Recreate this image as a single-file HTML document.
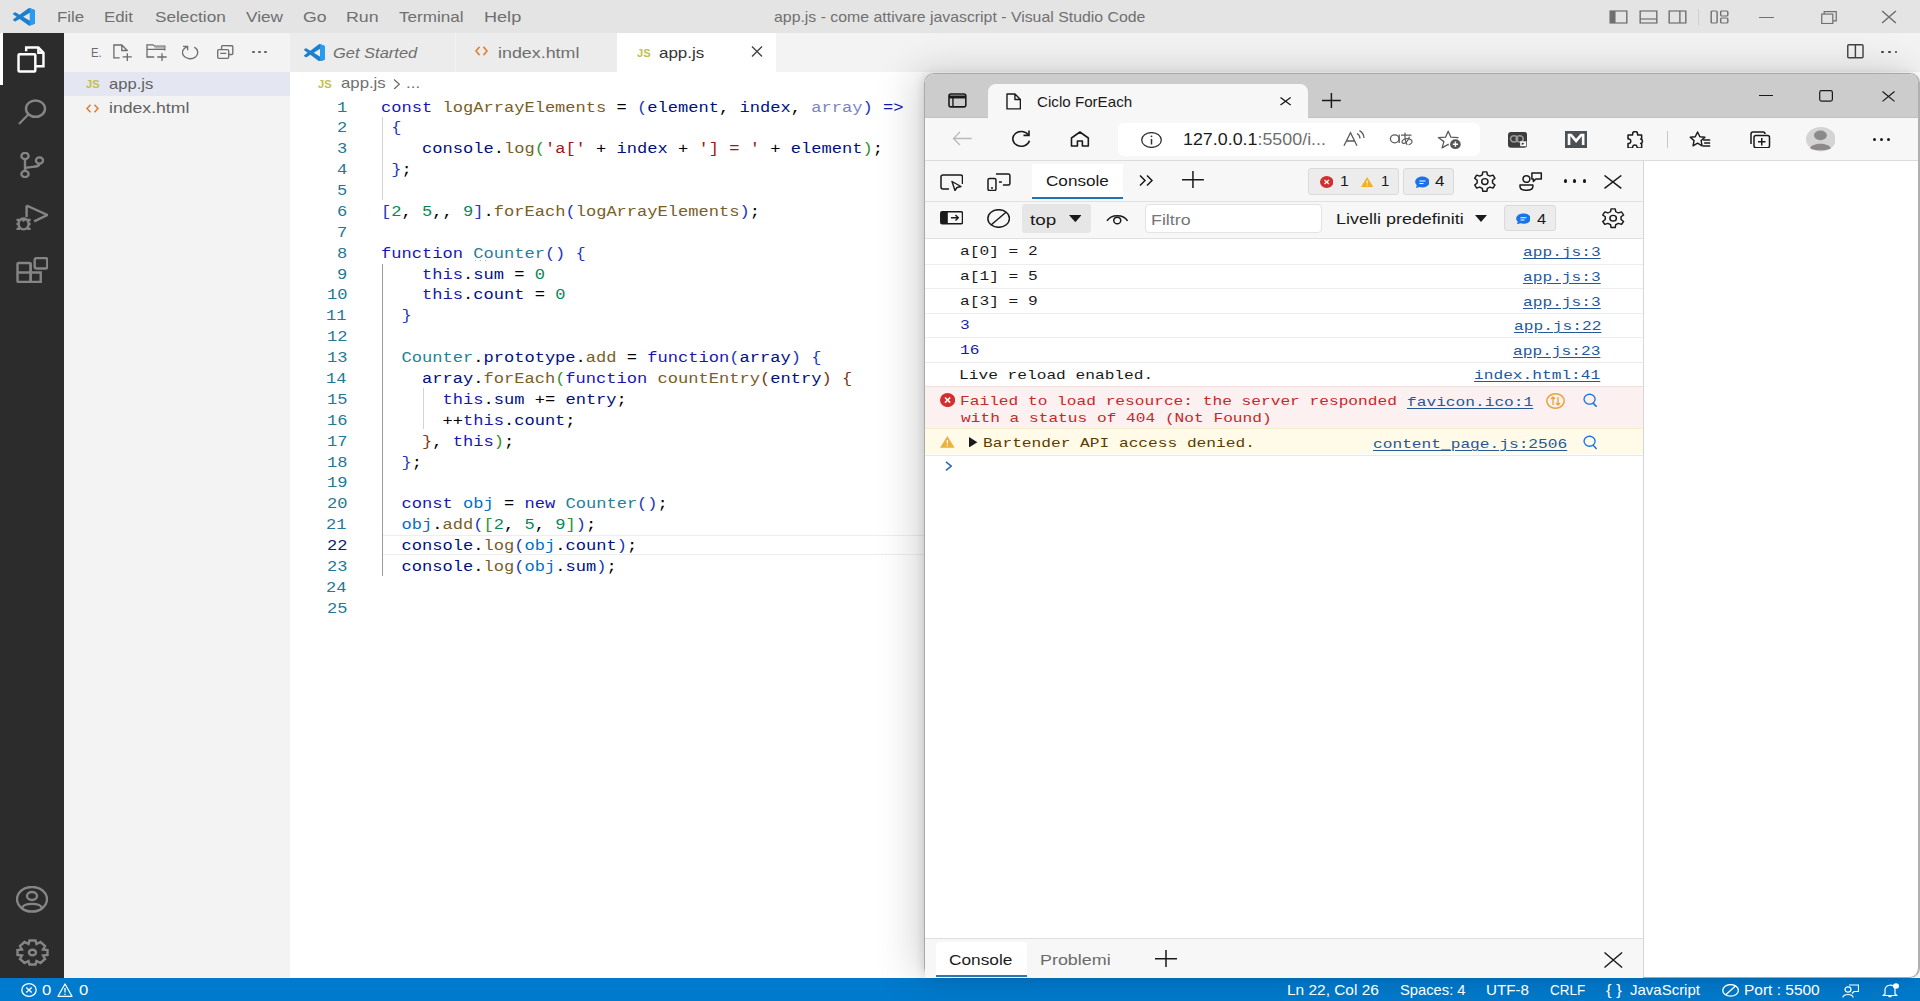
<!DOCTYPE html>
<html><head><meta charset="utf-8"><style>*{margin:0;padding:0;box-sizing:border-box}
html,body{width:1920px;height:1001px;overflow:hidden;background:#fff}
.a{position:absolute}
.t{position:absolute;line-height:1;white-space:pre;transform-origin:0 0}
.k{color:#1717b0}.v{color:#001080}.f{color:#795e26}.s{color:#a31515}.n{color:#098658}.c{color:#267f99}.o{color:#0070c1}
.b1{color:#2538b8}.b2{color:#319331}.b3{color:#7b3814}.u{color:#7b84bd}
</style></head><body>
<div class="a" style="left:0.00px;top:0.00px;width:1920.00px;height:33.00px;background:#e4e4e4;"></div>
<div class="a" style="left:0.00px;top:33.00px;width:64.00px;height:945.00px;background:#2c2c2c;"></div>
<div class="a" style="left:0.00px;top:33.00px;width:3.00px;height:52.00px;background:#ffffff;"></div>
<div class="a" style="left:64.00px;top:33.00px;width:226.00px;height:945.00px;background:#f3f3f3;"></div>
<div class="a" style="left:290.00px;top:33.00px;width:1630.00px;height:38.50px;background:#f3f3f3;"></div>
<div class="a" style="left:290.00px;top:33.00px;width:165.00px;height:38.50px;background:#ececec;"></div>
<div class="a" style="left:455.00px;top:33.00px;width:1.00px;height:38.50px;background:#f3f3f3;"></div>
<div class="a" style="left:456.00px;top:33.00px;width:161.00px;height:38.50px;background:#ececec;"></div>
<div class="a" style="left:617.00px;top:33.00px;width:159.00px;height:38.50px;background:#ffffff;"></div>
<div class="a" style="left:290.00px;top:71.50px;width:634.00px;height:906.50px;background:#ffffff;"></div>
<div class="a" style="left:64.00px;top:72.00px;width:226.00px;height:24.00px;background:#e4e6f1;"></div>
<div class="a" style="left:0.00px;top:978.00px;width:1920.00px;height:23.00px;background:#007acc;"></div>
<svg class="a" style="left:12.70px;top:8.00px;" width="22.50" height="17.70" viewBox="0 0 100 100" preserveAspectRatio="none"><path d="M96.46 10.8 L75.86 0.87 A6.23 6.23 0 0 0 68.76 2.08 L29.33 38.04 L12.15 25 A4.16 4.16 0 0 0 6.83 25.24 L1.36 30.2 A4.17 4.17 0 0 0 1.36 36.36 L16.26 50 L1.36 63.64 A4.17 4.17 0 0 0 1.36 69.8 L6.83 74.77 A4.16 4.16 0 0 0 12.15 75.01 L29.33 61.97 L68.76 97.93 A6.23 6.23 0 0 0 75.86 99.14 L96.46 89.21 A6.25 6.25 0 0 0 100 83.58 V16.43 A6.25 6.25 0 0 0 96.46 10.8 Z M75.01 72.7 L45.1 50 L75.01 27.3 Z" fill="#1b80cf"/><path d="M75.86 0.87 L96.46 10.8 A6.25 6.25 0 0 1 100 16.43 V83.58 A6.25 6.25 0 0 1 96.46 89.21 L75.86 99.14 A6.23 6.23 0 0 1 68.76 97.93 Q75 96 75 90 V10 Q75 4 68.76 2.08 A6.23 6.23 0 0 1 75.86 0.87 Z" fill="#2a9bf0"/></svg>
<div class="t" style="left:56.65px;top:9.35px;font-family:'Liberation Sans',sans-serif;font-size:15px;color:#6f6f6f;transform:scaleX(1.1223);">File</div>
<div class="t" style="left:104.15px;top:9.35px;font-family:'Liberation Sans',sans-serif;font-size:15px;color:#6f6f6f;transform:scaleX(1.1213);">Edit</div>
<div class="t" style="left:154.63px;top:9.35px;font-family:'Liberation Sans',sans-serif;font-size:15px;color:#6f6f6f;transform:scaleX(1.1469);">Selection</div>
<div class="t" style="left:245.91px;top:9.35px;font-family:'Liberation Sans',sans-serif;font-size:15px;color:#6f6f6f;transform:scaleX(1.1500);">View</div>
<div class="t" style="left:303.12px;top:9.35px;font-family:'Liberation Sans',sans-serif;font-size:15px;color:#6f6f6f;transform:scaleX(1.1780);">Go</div>
<div class="t" style="left:345.58px;top:9.35px;font-family:'Liberation Sans',sans-serif;font-size:15px;color:#6f6f6f;transform:scaleX(1.1834);">Run</div>
<div class="t" style="left:398.66px;top:9.35px;font-family:'Liberation Sans',sans-serif;font-size:15px;color:#6f6f6f;transform:scaleX(1.1382);">Terminal</div>
<div class="t" style="left:483.55px;top:9.35px;font-family:'Liberation Sans',sans-serif;font-size:15px;color:#6f6f6f;transform:scaleX(1.2059);">Help</div>
<div class="t" style="left:774.37px;top:9.35px;font-family:'Liberation Sans',sans-serif;font-size:15px;color:#707070;transform:scaleX(1.0564);">app.js - come attivare javascript - Visual Studio Code</div>
<svg class="a" style="left:1609.00px;top:9.00px;" width="19.00" height="16.00" viewBox="0 0 16 16" preserveAspectRatio="none"><rect x="1" y="2" width="14" height="12" fill="none" stroke="#707070" stroke-width="1.2"/><rect x="1" y="2" width="4.5" height="12" fill="#707070"/></svg>
<svg class="a" style="left:1639.00px;top:9.00px;" width="19.00" height="16.00" viewBox="0 0 16 16" preserveAspectRatio="none"><rect x="1" y="2" width="14" height="12" fill="none" stroke="#707070" stroke-width="1.2"/><line x1="1" y1="10" x2="15" y2="10" stroke="#707070" stroke-width="1.2"/></svg>
<svg class="a" style="left:1668.00px;top:9.00px;" width="19.00" height="16.00" viewBox="0 0 16 16" preserveAspectRatio="none"><rect x="1" y="2" width="14" height="12" fill="none" stroke="#707070" stroke-width="1.2"/><line x1="10" y1="2" x2="10" y2="14" stroke="#707070" stroke-width="1.2"/></svg>
<div class="a" style="left:1698.00px;top:9.00px;width:1.00px;height:16.00px;background:#cfcfcf;"></div>
<svg class="a" style="left:1710.00px;top:9.00px;" width="19.00" height="16.00" viewBox="0 0 16 16" preserveAspectRatio="none"><rect x="1" y="2" width="5" height="12" rx="1" fill="none" stroke="#707070" stroke-width="1.2"/><rect x="9" y="2" width="6" height="5" rx="1" fill="none" stroke="#707070" stroke-width="1.2"/><rect x="9" y="9" width="6" height="5" rx="1" fill="none" stroke="#707070" stroke-width="1.2"/></svg>
<div class="a" style="left:1759.00px;top:17.00px;width:15.00px;height:1.20px;background:#707070;"></div>
<svg class="a" style="left:1821.00px;top:11.00px;" width="16.00" height="13.00" viewBox="0 0 13 11" preserveAspectRatio="none"><rect x="0.6" y="2.6" width="9" height="8" fill="none" stroke="#707070" stroke-width="1"/><path d="M2.6 2.6 V0.6 H12.4 V8.4 H9.6" fill="none" stroke="#707070" stroke-width="1"/></svg>
<svg class="a" style="left:1881.00px;top:10.00px;" width="16.00" height="14.00" viewBox="0 0 14 14" preserveAspectRatio="none"><path d="M1 1 L13 13 M13 1 L1 13" stroke="#707070" stroke-width="1.3"/></svg>
<svg class="a" style="left:17.10px;top:45.80px;" width="28.50" height="27.00" viewBox="0 0 28 26" preserveAspectRatio="none"><path d="M9 5 V1.5 H21 L26 6.5 V19.5 H18" fill="none" stroke="#fff" stroke-width="2.4"/><path d="M21 1.5 V6.5 H26" fill="none" stroke="#fff" stroke-width="2.4"/><rect x="1.5" y="8" width="16.5" height="16.5" rx="1" fill="none" stroke="#fff" stroke-width="2.4"/></svg>
<svg class="a" style="left:17.40px;top:98.50px;" width="30.00" height="26.50" viewBox="0 0 30 26" preserveAspectRatio="none"><ellipse cx="18.5" cy="9.5" rx="9.5" ry="8" fill="none" stroke="#858585" stroke-width="2.4" stroke-width="2.4"/><line x1="11.5" y1="15" x2="2" y2="24.5" stroke="#858585" stroke-width="2.2"/></svg>
<svg class="a" style="left:19.50px;top:151.50px;" width="24.50" height="26.50" viewBox="0 0 24.5 26.5" preserveAspectRatio="none"><ellipse cx="5" cy="4" rx="3.6" ry="3.1" fill="none" stroke="#858585" stroke-width="2.4"/><ellipse cx="5" cy="22" rx="3.6" ry="3.1" fill="none" stroke="#858585" stroke-width="2.4"/><ellipse cx="19.5" cy="8.5" rx="3.6" ry="3.1" fill="none" stroke="#858585" stroke-width="2.4"/><path d="M5 7.2 V18.8 M19.5 11.6 C19.5 16 12 14 5.5 16" fill="none" stroke="#858585" stroke-width="2.4"/></svg>
<svg class="a" style="left:15.70px;top:204.30px;" width="32.30" height="26.90" viewBox="0 0 32 27" preserveAspectRatio="none"><path d="M10.5 1.5 L31 11 L18 17.5 M10.5 1.5 V13" fill="none" stroke="#858585" stroke-width="2.4"/><ellipse cx="7.5" cy="20" rx="5" ry="5.5" fill="none" stroke="#858585" stroke-width="2.4"/><path d="M0.5 16 H4 M0.5 20 H2.5 M0.5 25 H4 M11 16 H14.5 M12.5 20 H14.5 M11 25 H14.5 M5 14.5 L7.5 16.5 L10 14.5" fill="none" stroke="#858585" stroke-width="2.4"/></svg>
<svg class="a" style="left:15.70px;top:256.80px;" width="32.30" height="26.40" viewBox="0 0 32 26.5" preserveAspectRatio="none"><rect x="1.5" y="6" width="13" height="19" rx="1" fill="none" stroke="#858585" stroke-width="2.4"/><path d="M1.5 15.5 H24.5 V25 H14.5 V6" fill="none" stroke="#858585" stroke-width="2.4"/><rect x="18.5" y="1" width="12.5" height="10.5" rx="2" fill="none" stroke="#858585" stroke-width="2.4"/></svg>
<svg class="a" style="left:16.00px;top:886.00px;" width="32.00" height="26.50" viewBox="0 0 32 26.5" preserveAspectRatio="none"><ellipse cx="16" cy="13.25" rx="15" ry="12.3" fill="none" stroke="#858585" stroke-width="2.4"/><ellipse cx="16" cy="10" rx="5" ry="4" fill="none" stroke="#858585" stroke-width="2.4"/><path d="M6 22 C8 16.5 24 16.5 26 22" fill="none" stroke="#858585" stroke-width="2.4"/></svg>
<svg class="a" style="left:15.50px;top:938.50px;" width="33.00" height="27.00" viewBox="0 0 33 27" preserveAspectRatio="none"><path d="M13.5 1.5 H19.5 L20.5 5 L24.5 3 L29 7 L27 10.5 L31.5 11 V16 L27 16.5 L29 20 L24.5 24 L20.5 22 L19.5 25.5 H13.5 L12.5 22 L8.5 24 L4 20 L6 16.5 L1.5 16 V11 L6 10.5 L4 7 L8.5 3 L12.5 5 Z" fill="none" stroke="#858585" stroke-width="2.4"/><ellipse cx="16.5" cy="13.5" rx="3.5" ry="2.8" fill="none" stroke="#858585" stroke-width="2.4"/></svg>
<div class="t" style="left:90.70px;top:46.52px;font-family:'Liberation Sans',sans-serif;font-size:12.8px;color:#6b6b6b;transform:scaleX(0.8827);">E.</div>
<svg class="a" style="left:110.00px;top:42.00px;" width="60.00" height="21.00" viewBox="0 0 60 21" preserveAspectRatio="none"><path d="M9.7 15.9 H3.9 V3 H11.8 L17.3 8.5 V9 M11.8 3 V8.5 H17.3 M17.3 11.3 V19 M12.6 14.9 H21.8" fill="none" stroke="#6b6b6b" stroke-width="1.3"/><path d="M44.2 15 H37 V2.8 H43 L44.8 4.2 H54.8 V8.4 M37 7.3 H54.8 M52 11.3 V19 M47.3 15 H56.6" fill="none" stroke="#6b6b6b" stroke-width="1.3"/><rect x="44.5" y="4.6" width="10" height="2.2" fill="#b5b5b5"/></svg>
<svg class="a" style="left:182.00px;top:44.50px;" width="17.00" height="15.50" viewBox="0 0 17 15.5" preserveAspectRatio="none"><path d="M12.3 2.2 A7.6 6.3 0 1 1 5.3 1.6" fill="none" stroke="#6f6f6f" stroke-width="1.35"/><path d="M1 1.3 H5.6 V5.2" fill="none" stroke="#6f6f6f" stroke-width="1.35"/></svg>
<svg class="a" style="left:217.00px;top:45.00px;" width="16.50" height="14.00" viewBox="0 0 16.5 14" preserveAspectRatio="none"><rect x="0.7" y="4.6" width="11" height="8.7" rx="1.2" fill="none" stroke="#6f6f6f" stroke-width="1.35"/><path d="M4.6 4.6 V1.5 A0.9 0.9 0 0 1 5.5 0.7 H14.9 A0.9 0.9 0 0 1 15.8 1.5 V8.7 A0.9 0.9 0 0 1 14.9 9.5 H11.7 M3.2 8.4 H9.3" fill="none" stroke="#6f6f6f" stroke-width="1.35"/></svg>
<div class="a" style="left:252.30px;top:51.00px;width:2.40px;height:2.40px;background:#616161;border-radius:50%"></div>
<div class="a" style="left:258.30px;top:51.00px;width:2.40px;height:2.40px;background:#616161;border-radius:50%"></div>
<div class="a" style="left:264.30px;top:51.00px;width:2.40px;height:2.40px;background:#616161;border-radius:50%"></div>
<div class="t" style="left:85.83px;top:78.65px;font-family:'Liberation Sans',sans-serif;font-size:11px;color:#c1c14c;transform:scaleX(1.0101);font-weight:bold;">JS</div>
<div class="t" style="left:109.34px;top:76.00px;font-family:'Liberation Sans',sans-serif;font-size:15px;color:#616161;transform:scaleX(1.1047);">app.js</div>
<svg class="a" style="left:86.00px;top:104.00px;" width="13.00" height="9.00" viewBox="0 0 13 9" preserveAspectRatio="none"><path d="M4.5 0.8 L1 4.5 L4.5 8.2 M8.5 0.8 L12 4.5 L8.5 8.2" fill="none" stroke="#e37933" stroke-width="1.5"/></svg>
<div class="t" style="left:108.85px;top:100.25px;font-family:'Liberation Sans',sans-serif;font-size:15px;color:#616161;transform:scaleX(1.1751);">index.html</div>
<svg class="a" style="left:303.60px;top:43.90px;" width="21.60" height="17.50" viewBox="0 0 100 100" preserveAspectRatio="none"><path d="M96.46 10.8 L75.86 0.87 A6.23 6.23 0 0 0 68.76 2.08 L29.33 38.04 L12.15 25 A4.16 4.16 0 0 0 6.83 25.24 L1.36 30.2 A4.17 4.17 0 0 0 1.36 36.36 L16.26 50 L1.36 63.64 A4.17 4.17 0 0 0 1.36 69.8 L6.83 74.77 A4.16 4.16 0 0 0 12.15 75.01 L29.33 61.97 L68.76 97.93 A6.23 6.23 0 0 0 75.86 99.14 L96.46 89.21 A6.25 6.25 0 0 0 100 83.58 V16.43 A6.25 6.25 0 0 0 96.46 10.8 Z M75.01 72.7 L45.1 50 L75.01 27.3 Z" fill="#1b80cf"/><path d="M75.86 0.87 L96.46 10.8 A6.25 6.25 0 0 1 100 16.43 V83.58 A6.25 6.25 0 0 1 96.46 89.21 L75.86 99.14 A6.23 6.23 0 0 1 68.76 97.93 Q75 96 75 90 V10 Q75 4 68.76 2.08 A6.23 6.23 0 0 1 75.86 0.87 Z" fill="#2a9bf0"/></svg>
<div class="t" style="left:333.08px;top:45.05px;font-family:'Liberation Sans',sans-serif;font-size:15px;color:#6f6f6f;transform:scaleX(1.0978);font-style:italic;">Get Started</div>
<svg class="a" style="left:475.00px;top:46.00px;" width="13.00" height="10.00" viewBox="0 0 13 9" preserveAspectRatio="none"><path d="M4.5 0.8 L1 4.5 L4.5 8.2 M8.5 0.8 L12 4.5 L8.5 8.2" fill="none" stroke="#e37933" stroke-width="1.5"/></svg>
<div class="t" style="left:497.84px;top:45.25px;font-family:'Liberation Sans',sans-serif;font-size:15px;color:#6f6f6f;transform:scaleX(1.1902);">index.html</div>
<div class="t" style="left:636.83px;top:47.65px;font-family:'Liberation Sans',sans-serif;font-size:11px;color:#c1c14c;transform:scaleX(1.0101);font-weight:bold;">JS</div>
<div class="t" style="left:659.32px;top:45.25px;font-family:'Liberation Sans',sans-serif;font-size:15px;color:#333333;transform:scaleX(1.1304);">app.js</div>
<svg class="a" style="left:751.00px;top:46.00px;" width="12.00" height="11.00" viewBox="0 0 12 11" preserveAspectRatio="none"><path d="M1 0.5 L11 10.5 M11 0.5 L1 10.5" stroke="#424242" stroke-width="1.4"/></svg>
<div class="t" style="left:317.83px;top:78.65px;font-family:'Liberation Sans',sans-serif;font-size:11px;color:#c1c14c;transform:scaleX(1.0101);font-weight:bold;">JS</div>
<div class="t" style="left:341.23px;top:75.45px;font-family:'Liberation Sans',sans-serif;font-size:15px;color:#6f6f6f;transform:scaleX(1.1175);">app.js</div>
<svg class="a" style="left:393.00px;top:78.50px;" width="7.40" height="10.50" viewBox="0 0 7 10" preserveAspectRatio="none"><path d="M1 0.5 L6 5 L1 9.5" fill="none" stroke="#6f6f6f" stroke-width="1.3"/></svg>
<div class="t" style="left:406.48px;top:75.45px;font-family:'Liberation Sans',sans-serif;font-size:15px;color:#6f6f6f;transform:scaleX(1.1282);">...</div>
<div class="a" style="left:382.00px;top:535.30px;width:542.00px;height:19.50px;background:transparent;border-top:1.5px solid #eeeeee;border-bottom:1.5px solid #eeeeee"></div>
<div class="a" style="left:381.50px;top:117.00px;width:1.30px;height:83.00px;background:#d3d3d3;"></div>
<div class="a" style="left:381.50px;top:264.00px;width:1.30px;height:312.00px;background:#9a9a9a;"></div>
<div class="a" style="left:422.50px;top:388.00px;width:1.30px;height:41.00px;background:#d3d3d3;"></div>
<div class="t" style="left:336.61px;top:100.56px;font-family:'Liberation Mono',monospace;font-size:14px;color:#237893;transform:scaleX(1.2190);">1</div>
<div class="t" style="left:381.40px;top:100.56px;font-family:'Liberation Mono',monospace;font-size:14px;color:#000;transform:scaleX(1.2190)"><span class="k">const</span> <span class="f">logArrayElements</span> = <span class="b1">(</span><span class="v">element</span>, <span class="v">index</span>, <span class="u">array</span><span class="b1">)</span> <span class="k">=&gt;</span></div>
<div class="t" style="left:336.95px;top:121.44px;font-family:'Liberation Mono',monospace;font-size:14px;color:#237893;transform:scaleX(1.2190);">2</div>
<div class="t" style="left:381.40px;top:121.44px;font-family:'Liberation Mono',monospace;font-size:14px;color:#000;transform:scaleX(1.2190)"> <span class="b1">{</span></div>
<div class="t" style="left:336.87px;top:142.32px;font-family:'Liberation Mono',monospace;font-size:14px;color:#237893;transform:scaleX(1.2190);">3</div>
<div class="t" style="left:381.40px;top:142.32px;font-family:'Liberation Mono',monospace;font-size:14px;color:#000;transform:scaleX(1.2190)">    <span class="v">console</span>.<span class="f">log</span><span class="b2">(</span><span class="s">'a['</span> + <span class="v">index</span> + <span class="s">'] = '</span> + <span class="v">element</span><span class="b2">)</span>;</div>
<div class="t" style="left:336.61px;top:163.20px;font-family:'Liberation Mono',monospace;font-size:14px;color:#237893;transform:scaleX(1.2190);">4</div>
<div class="t" style="left:381.40px;top:163.20px;font-family:'Liberation Mono',monospace;font-size:14px;color:#000;transform:scaleX(1.2190)"> <span class="b1">}</span>;</div>
<div class="t" style="left:336.87px;top:184.08px;font-family:'Liberation Mono',monospace;font-size:14px;color:#237893;transform:scaleX(1.2190);">5</div>
<div class="t" style="left:336.87px;top:204.96px;font-family:'Liberation Mono',monospace;font-size:14px;color:#237893;transform:scaleX(1.2190);">6</div>
<div class="t" style="left:381.40px;top:204.96px;font-family:'Liberation Mono',monospace;font-size:14px;color:#000;transform:scaleX(1.2190)"><span class="b1">[</span><span class="n">2</span>, <span class="n">5</span>,, <span class="n">9</span><span class="b1">]</span>.<span class="f">forEach</span><span class="b1">(</span><span class="f">logArrayElements</span><span class="b1">)</span>;</div>
<div class="t" style="left:337.13px;top:225.84px;font-family:'Liberation Mono',monospace;font-size:14px;color:#237893;transform:scaleX(1.2190);">7</div>
<div class="t" style="left:336.87px;top:246.72px;font-family:'Liberation Mono',monospace;font-size:14px;color:#237893;transform:scaleX(1.2190);">8</div>
<div class="t" style="left:381.40px;top:246.72px;font-family:'Liberation Mono',monospace;font-size:14px;color:#000;transform:scaleX(1.2190)"><span class="k">function</span> <span class="c">Counter</span><span class="b1">()</span> <span class="b1">{</span></div>
<div class="t" style="left:336.95px;top:267.60px;font-family:'Liberation Mono',monospace;font-size:14px;color:#237893;transform:scaleX(1.2190);">9</div>
<div class="t" style="left:381.40px;top:267.60px;font-family:'Liberation Mono',monospace;font-size:14px;color:#000;transform:scaleX(1.2190)">    <span class="k">this</span>.<span class="v">sum</span> = <span class="n">0</span></div>
<div class="t" style="left:326.54px;top:288.48px;font-family:'Liberation Mono',monospace;font-size:14px;color:#237893;transform:scaleX(1.2190);">10</div>
<div class="t" style="left:381.40px;top:288.48px;font-family:'Liberation Mono',monospace;font-size:14px;color:#000;transform:scaleX(1.2190)">    <span class="k">this</span>.<span class="v">count</span> = <span class="n">0</span></div>
<div class="t" style="left:326.37px;top:309.36px;font-family:'Liberation Mono',monospace;font-size:14px;color:#237893;transform:scaleX(1.2190);">11</div>
<div class="t" style="left:381.40px;top:309.36px;font-family:'Liberation Mono',monospace;font-size:14px;color:#000;transform:scaleX(1.2190)">  <span class="b1">}</span></div>
<div class="t" style="left:326.71px;top:330.24px;font-family:'Liberation Mono',monospace;font-size:14px;color:#237893;transform:scaleX(1.2190);">12</div>
<div class="t" style="left:326.63px;top:351.12px;font-family:'Liberation Mono',monospace;font-size:14px;color:#237893;transform:scaleX(1.2190);">13</div>
<div class="t" style="left:381.40px;top:351.12px;font-family:'Liberation Mono',monospace;font-size:14px;color:#000;transform:scaleX(1.2190)">  <span class="c">Counter</span>.<span class="v">prototype</span>.<span class="f">add</span> = <span class="k">function</span><span class="b1">(</span><span class="v">array</span><span class="b1">)</span> <span class="b1">{</span></div>
<div class="t" style="left:326.37px;top:372.00px;font-family:'Liberation Mono',monospace;font-size:14px;color:#237893;transform:scaleX(1.2190);">14</div>
<div class="t" style="left:381.40px;top:372.00px;font-family:'Liberation Mono',monospace;font-size:14px;color:#000;transform:scaleX(1.2190)">    <span class="v">array</span>.<span class="f">forEach</span><span class="b2">(</span><span class="k">function</span> <span class="f">countEntry</span><span class="b3">(</span><span class="v">entry</span><span class="b3">)</span> <span class="b3">{</span></div>
<div class="t" style="left:326.63px;top:392.88px;font-family:'Liberation Mono',monospace;font-size:14px;color:#237893;transform:scaleX(1.2190);">15</div>
<div class="t" style="left:381.40px;top:392.88px;font-family:'Liberation Mono',monospace;font-size:14px;color:#000;transform:scaleX(1.2190)">      <span class="k">this</span>.<span class="v">sum</span> += <span class="v">entry</span>;</div>
<div class="t" style="left:326.63px;top:413.76px;font-family:'Liberation Mono',monospace;font-size:14px;color:#237893;transform:scaleX(1.2190);">16</div>
<div class="t" style="left:381.40px;top:413.76px;font-family:'Liberation Mono',monospace;font-size:14px;color:#000;transform:scaleX(1.2190)">      ++<span class="k">this</span>.<span class="v">count</span>;</div>
<div class="t" style="left:326.89px;top:434.64px;font-family:'Liberation Mono',monospace;font-size:14px;color:#237893;transform:scaleX(1.2190);">17</div>
<div class="t" style="left:381.40px;top:434.64px;font-family:'Liberation Mono',monospace;font-size:14px;color:#000;transform:scaleX(1.2190)">    <span class="b3">}</span>, <span class="k">this</span><span class="b2">)</span>;</div>
<div class="t" style="left:326.63px;top:455.52px;font-family:'Liberation Mono',monospace;font-size:14px;color:#237893;transform:scaleX(1.2190);">18</div>
<div class="t" style="left:381.40px;top:455.52px;font-family:'Liberation Mono',monospace;font-size:14px;color:#000;transform:scaleX(1.2190)">  <span class="b1">}</span>;</div>
<div class="t" style="left:326.71px;top:476.40px;font-family:'Liberation Mono',monospace;font-size:14px;color:#237893;transform:scaleX(1.2190);">19</div>
<div class="t" style="left:326.54px;top:497.28px;font-family:'Liberation Mono',monospace;font-size:14px;color:#237893;transform:scaleX(1.2190);">20</div>
<div class="t" style="left:381.40px;top:497.28px;font-family:'Liberation Mono',monospace;font-size:14px;color:#000;transform:scaleX(1.2190)">  <span class="k">const</span> <span class="o">obj</span> = <span class="k">new</span> <span class="c">Counter</span><span class="b1">()</span>;</div>
<div class="t" style="left:326.37px;top:518.16px;font-family:'Liberation Mono',monospace;font-size:14px;color:#237893;transform:scaleX(1.2190);">21</div>
<div class="t" style="left:381.40px;top:518.16px;font-family:'Liberation Mono',monospace;font-size:14px;color:#000;transform:scaleX(1.2190)">  <span class="o">obj</span>.<span class="f">add</span><span class="b1">(</span><span class="b2">[</span><span class="n">2</span>, <span class="n">5</span>, <span class="n">9</span><span class="b2">]</span><span class="b1">)</span>;</div>
<div class="t" style="left:326.71px;top:539.04px;font-family:'Liberation Mono',monospace;font-size:14px;color:#0b216f;transform:scaleX(1.2190);">22</div>
<div class="t" style="left:381.40px;top:539.04px;font-family:'Liberation Mono',monospace;font-size:14px;color:#000;transform:scaleX(1.2190)">  <span class="v">console</span>.<span class="f">log</span><span class="b1">(</span><span class="o">obj</span>.<span class="v">count</span><span class="b1">)</span>;</div>
<div class="t" style="left:326.63px;top:559.92px;font-family:'Liberation Mono',monospace;font-size:14px;color:#237893;transform:scaleX(1.2190);">23</div>
<div class="t" style="left:381.40px;top:559.92px;font-family:'Liberation Mono',monospace;font-size:14px;color:#000;transform:scaleX(1.2190)">  <span class="v">console</span>.<span class="f">log</span><span class="b1">(</span><span class="o">obj</span>.<span class="v">sum</span><span class="b1">)</span>;</div>
<div class="t" style="left:326.37px;top:580.80px;font-family:'Liberation Mono',monospace;font-size:14px;color:#237893;transform:scaleX(1.2190);">24</div>
<div class="t" style="left:326.63px;top:601.68px;font-family:'Liberation Mono',monospace;font-size:14px;color:#237893;transform:scaleX(1.2190);">25</div>
<div class="a" style="left:924px;top:73px;width:996px;height:905px;border-radius:10px;box-shadow:-10px -2px 40px rgba(0,0,0,0.16),-2px 0 8px rgba(0,0,0,0.10)"></div>
<div class="a" style="left:924px;top:73px;width:996px;height:905px;border-radius:10px;background:#fff;border:1px solid #a9a9a9;border-right:2px solid #b0b0b0"></div>
<div class="a" style="left:925.00px;top:74.00px;width:993.00px;height:44.00px;background:#cccccc;border-radius:9px 9px 0 0"></div>
<div class="a" style="left:925.00px;top:117.00px;width:993.00px;height:1.00px;background:#c2c2c2;"></div>
<div class="a" style="left:988px;top:83.5px;width:320px;height:34.5px;background:#f7f7f7;border-radius:8px 8px 0 0"></div>
<svg class="a" style="left:947.80px;top:93.40px;" width="18.80" height="14.90" viewBox="0 0 19 15" preserveAspectRatio="none"><rect x="1" y="1" width="17" height="13" rx="2" fill="none" stroke="#1a1a1a" stroke-width="1.6"/><path d="M1 4 H18" stroke="#1a1a1a" stroke-width="3"/><path d="M5 4 V14" stroke="#1a1a1a" stroke-width="1.4"/></svg>
<svg class="a" style="left:1004.60px;top:92.80px;" width="16.90" height="16.90" viewBox="0 0 17 17" preserveAspectRatio="none"><path d="M2 1 H10 L15.5 6.5 V16 H2 Z M10 1 V6.5 H15.5" fill="none" stroke="#1a1a1a" stroke-width="1.4" stroke-linejoin="round"/></svg>
<div class="t" style="left:1037.04px;top:93.55px;font-family:'Liberation Sans',sans-serif;font-size:15px;color:#1a1a1a;transform:scaleX(1.0100);">Ciclo ForEach</div>
<svg class="a" style="left:1280.20px;top:97.00px;" width="11.20" height="8.50" viewBox="0 0 11 9" preserveAspectRatio="none"><path d="M0.5 0.5 L10.5 8.5 M10.5 0.5 L0.5 8.5" stroke="#1a1a1a" stroke-width="1.3"/></svg>
<svg class="a" style="left:1321.80px;top:92.80px;" width="18.80" height="14.90" viewBox="0 0 19 15" preserveAspectRatio="none"><path d="M9.5 0 V15 M0 7.5 H19" stroke="#1a1a1a" stroke-width="1.5"/></svg>
<div class="a" style="left:1759.00px;top:94.80px;width:14.00px;height:1.30px;background:#1a1a1a;"></div>
<svg class="a" style="left:1819.30px;top:89.80px;" width="14.10" height="11.80" viewBox="0 0 14 11.8" preserveAspectRatio="none"><rect x="0.7" y="0.7" width="12.6" height="10.4" rx="1.8" fill="none" stroke="#1a1a1a" stroke-width="1.2"/></svg>
<svg class="a" style="left:1881.60px;top:90.70px;" width="13.00" height="10.90" viewBox="0 0 13 11" preserveAspectRatio="none"><path d="M0.5 0.5 L12.5 10.5 M12.5 0.5 L0.5 10.5" stroke="#1a1a1a" stroke-width="1.2"/></svg>
<div class="a" style="left:925.00px;top:118.00px;width:993.00px;height:42.00px;background:#f7f7f7;"></div>
<div class="a" style="left:925.00px;top:160.00px;width:993.00px;height:1.00px;background:#dcdcdc;"></div>
<svg class="a" style="left:952.00px;top:131.00px;" width="20.80" height="15.00" viewBox="0 0 21 15" preserveAspectRatio="none"><path d="M20 7.5 H1.5 M8 1 L1.5 7.5 L8 14" fill="none" stroke="#b9b9b9" stroke-width="1.3"/></svg>
<svg class="a" style="left:1010.00px;top:130.00px;" width="22.00" height="17.70" viewBox="0 0 22 18" preserveAspectRatio="none"><path d="M18.5 5 A8.5 7.5 0 1 0 19.5 11" fill="none" stroke="#1a1a1a" stroke-width="1.6"/><path d="M19 0.5 V5.5 H13.5" fill="none" stroke="#1a1a1a" stroke-width="1.6"/></svg>
<svg class="a" style="left:1070.00px;top:130.80px;" width="19.80" height="16.00" viewBox="0 0 20 16" preserveAspectRatio="none"><path d="M1.5 7 L10 1 L18.5 7 V15 H12.5 V10 H7.5 V15 H1.5 Z" fill="none" stroke="#1a1a1a" stroke-width="1.6" stroke-linejoin="round"/></svg>
<div class="a" style="left:1118px;top:123px;width:362px;height:32.5px;background:#fff;border-radius:6px"></div>
<svg class="a" style="left:1141.00px;top:131.60px;" width="21.00" height="16.00" viewBox="0 0 21 16" preserveAspectRatio="none"><ellipse cx="10.5" cy="8" rx="9.8" ry="7.4" fill="none" stroke="#333" stroke-width="1.3"/><path d="M10.5 7 V12.5" stroke="#333" stroke-width="1.5"/><circle cx="10.5" cy="4.3" r="0.9" fill="#333"/></svg>
<div class="t" style="left:1182.66px;top:130.97px;font-family:'Liberation Sans',sans-serif;font-size:16.5px;color:#1a1a1a;transform:scaleX(1.0823);">127.0.0.1<span style="color:#6e6e6e">:5500/i...</span></div>
<svg class="a" style="left:1338.00px;top:128.00px;" width="127.00" height="22.00" viewBox="0 0 127 22" preserveAspectRatio="none"><path d="M6 17.8 L12.5 4.8 L19 17.8 M8.5 13 H16.5" fill="none" stroke="#5a5a5a" stroke-width="1.3"/><path d="M19 5.5 A6 6 0 0 1 22 10.5 M21.5 2.6 A9 9 0 0 1 26 10" fill="none" stroke="#5a5a5a" stroke-width="1.3"/><ellipse cx="56.7" cy="10.8" rx="4.3" ry="4" fill="none" stroke="#5a5a5a" stroke-width="1.3"/><path d="M61.2 6.5 V15" stroke="#5a5a5a" stroke-width="1.3"/><path d="M63.5 7.2 H73 M67 5 C66.8 10 67.2 13.5 69 16.5 M71.3 9 C70 13.5 66.5 16.5 64.6 15 C62.8 13.6 65 10.6 69 10.6 C72.5 10.6 74.5 12.2 74 14.2 C73.6 15.6 72.3 16.4 71 16.8" fill="none" stroke="#5a5a5a" stroke-width="1.2" stroke-linecap="round"/><path d="M110.20 3.20 L112.86 9.16 L120.09 9.56 L114.50 13.64 L116.31 19.84 L110.20 16.40 L104.09 19.84 L105.90 13.64 L100.31 9.56 L107.54 9.16 Z" fill="none" stroke="#5a5a5a" stroke-width="1.3" stroke-linejoin="round"/><ellipse cx="117.4" cy="16.2" rx="6.6" ry="6.1" fill="#fff"/><ellipse cx="117.4" cy="16.2" rx="5.3" ry="4.9" fill="#555"/><path d="M117.4 13.6 V18.8 M114.8 16.2 H120" stroke="#fff" stroke-width="1.4"/></svg>
<svg class="a" style="left:1507.50px;top:131.90px;" width="19.30" height="15.70" viewBox="0 0 19 16" preserveAspectRatio="none"><rect x="0" y="0" width="19" height="16" rx="3" fill="#3d3d3d"/><ellipse cx="6" cy="7" rx="3.5" ry="3.2" fill="none" stroke="#9a9a9a" stroke-width="1.6"/><ellipse cx="11.5" cy="7" rx="3.5" ry="3.2" fill="none" stroke="#9a9a9a" stroke-width="1.6"/><rect x="12" y="9.5" width="6" height="5" fill="#fff"/><path d="M13.5 10.7 L16.5 12 L13.5 13.3 Z" fill="#3d3d3d"/></svg>
<svg class="a" style="left:1564.70px;top:130.50px;" width="22.20" height="17.90" viewBox="0 0 22 18" preserveAspectRatio="none"><rect x="0" y="0" width="22" height="18" fill="#4a5054"/><path d="M4 14 V4 H6 L11 10 L16 4 H18 V14" fill="none" stroke="#fff" stroke-width="2.6" stroke-linejoin="miter"/></svg>
<svg class="a" style="left:1624.80px;top:130.50px;" width="20.20" height="17.90" viewBox="0 0 20 18" preserveAspectRatio="none"><path d="M7.5 3 A2.3 2.3 0 0 1 12.5 3 V4 H16.5 V8 H15.5 A2.3 2.3 0 0 1 15.5 12.5 H16.5 V17 H12 V16 A2.3 2.3 0 0 0 7.5 16 V17 H3 V12.5 H4 A2.3 2.3 0 0 0 4 8 H3 V4 H7.5 Z" fill="none" stroke="#1a1a1a" stroke-width="1.5" stroke-linejoin="round"/></svg>
<div class="a" style="left:1666.80px;top:131.00px;width:1.20px;height:17.00px;background:#c8c8c8;"></div>
<svg class="a" style="left:1689.30px;top:131.00px;" width="22.20" height="16.00" viewBox="0 0 22 16" preserveAspectRatio="none"><path d="M8.5 1 L10.8 5.8 L15.8 6.3 L12 9.6 L13 14.8 L8.5 12.2 L4 14.8 L5 9.6 L1.2 6.3 L6.2 5.8 Z" fill="none" stroke="#1a1a1a" stroke-width="1.4" stroke-linejoin="round"/><path d="M14 9 H21 M15 12 H21 M13.5 15 H21" stroke="#1a1a1a" stroke-width="1.4"/></svg>
<svg class="a" style="left:1748.00px;top:130.50px;" width="22.50" height="17.50" viewBox="0 0 22.5 17.5" preserveAspectRatio="none"><path d="M3 13 V3 A2 2 0 0 1 5 1 H15 A2 2 0 0 1 17 3" fill="none" stroke="#1a1a1a" stroke-width="1.5"/><rect x="6" y="4.5" width="15.5" height="12.3" rx="2" fill="none" stroke="#1a1a1a" stroke-width="1.5"/><path d="M13.75 7 V14.5 M10 10.7 H17.5" stroke="#1a1a1a" stroke-width="1.5"/></svg>
<svg class="a" style="left:1805.50px;top:127.30px;" width="29.80" height="24.40" viewBox="0 0 30 24.4" preserveAspectRatio="none"><ellipse cx="15" cy="12.2" rx="15" ry="12.2" fill="#d4d4d4"/><ellipse cx="14.5" cy="8.4" rx="6.5" ry="4.8" fill="#8c8a88"/><path d="M4 21.2 C6 15.2 23 15.2 25 21.2 C21 24 8 24 4 21.2 Z" fill="#8c8a88"/></svg>
<div class="a" style="left:1872.70px;top:137.50px;width:3.00px;height:3.00px;background:#1a1a1a;border-radius:50%"></div>
<div class="a" style="left:1879.70px;top:137.50px;width:3.00px;height:3.00px;background:#1a1a1a;border-radius:50%"></div>
<div class="a" style="left:1886.70px;top:137.50px;width:3.00px;height:3.00px;background:#1a1a1a;border-radius:50%"></div>
<div class="a" style="left:925.00px;top:161.00px;width:718.00px;height:39.50px;background:#f7f7f7;"></div>
<div class="a" style="left:925.00px;top:200.50px;width:718.00px;height:1.00px;background:#e0e0e0;"></div>
<div class="a" style="left:925.00px;top:201.50px;width:718.00px;height:36.50px;background:#f7f7f7;"></div>
<div class="a" style="left:925.00px;top:238.00px;width:718.00px;height:1.00px;background:#e0e0e0;"></div>
<div class="a" style="left:1643.00px;top:161.00px;width:1.20px;height:816.00px;background:#d6d6d6;"></div>
<div class="a" style="left:1032.00px;top:163.70px;width:90.70px;height:34.60px;background:#ffffff;"></div>
<div class="a" style="left:1032.00px;top:196.50px;width:90.70px;height:2.00px;background:#1f74b8;"></div>
<svg class="a" style="left:939.90px;top:174.00px;" width="23.40" height="17.00" viewBox="0 0 23.4 17" preserveAspectRatio="none"><path d="M9 15 H3 A2 2 0 0 1 1 13 V3 A2 2 0 0 1 3 1 H20.5 A2 2 0 0 1 22.5 3 V10" fill="none" stroke="#1a1a1a" stroke-width="1.5"/><path d="M12 7.5 L21 12.5 L17 13.5 L15 16.5 Z" fill="none" stroke="#1a1a1a" stroke-width="1.4" stroke-linejoin="round"/></svg>
<svg class="a" style="left:986.70px;top:173.00px;" width="23.90" height="18.00" viewBox="0 0 24 18" preserveAspectRatio="none"><path d="M9 1 H21.5 A1.5 1.5 0 0 1 23 2.5 V10.5 A1.5 1.5 0 0 1 21.5 12 H16" fill="none" stroke="#1a1a1a" stroke-width="1.5"/><rect x="1" y="5.5" width="8" height="12" rx="1.5" fill="none" stroke="#1a1a1a" stroke-width="1.5"/><path d="M4 15 H6 M12 9 H15" stroke="#1a1a1a" stroke-width="1.5"/></svg>
<div class="t" style="left:1045.94px;top:173.22px;font-family:'Liberation Sans',sans-serif;font-size:15.5px;color:#1a1a1a;transform:scaleX(1.1044);">Console</div>
<svg class="a" style="left:1139.00px;top:175.00px;" width="15.00" height="11.00" viewBox="0 0 15 11" preserveAspectRatio="none"><path d="M1 0.5 L6 5.5 L1 10.5 M8 0.5 L13 5.5 L8 10.5" fill="none" stroke="#1a1a1a" stroke-width="1.5"/></svg>
<svg class="a" style="left:1181.80px;top:170.70px;" width="21.90" height="17.70" viewBox="0 0 22 18" preserveAspectRatio="none"><path d="M11 0 V18 M0 9 H22" stroke="#1a1a1a" stroke-width="1.5"/></svg>
<div class="a" style="left:1308px;top:168px;width:91px;height:26.5px;background:#ececec;border:1px solid #dadada;border-radius:3px"></div>
<div class="a" style="left:1403px;top:168px;width:51px;height:26.5px;background:#ececec;border:1px solid #dadada;border-radius:3px"></div>
<svg class="a" style="left:1319.60px;top:175.70px;" width="13.40" height="11.90" viewBox="0 0 13.4 12" preserveAspectRatio="none"><ellipse cx="6.7" cy="6" rx="6.7" ry="6" fill="#d32f2f"/><path d="M4.5 4 L8.9 8 M8.9 4 L4.5 8" stroke="#fff" stroke-width="1.3"/></svg>
<div class="t" style="left:1340.21px;top:173.88px;font-family:'Liberation Sans',sans-serif;font-size:14.5px;color:#1a1a1a;transform:scaleX(1.0939);">1</div>
<svg class="a" style="left:1360.80px;top:176.70px;" width="12.20" height="9.90" viewBox="0 0 12.2 10" preserveAspectRatio="none"><path d="M6.1 0 L12.2 10 H0 Z" fill="#f2b01e"/><path d="M6.1 3.5 V6.5 M6.1 7.8 V8.8" stroke="#fff" stroke-width="1.1"/></svg>
<div class="t" style="left:1380.88px;top:173.88px;font-family:'Liberation Sans',sans-serif;font-size:14.5px;color:#1a1a1a;transform:scaleX(1.0305);">1</div>
<svg class="a" style="left:1414.70px;top:175.70px;" width="14.80" height="11.90" viewBox="0 0 15 12" preserveAspectRatio="none"><path d="M7.5 0.5 C11.8 0.5 14.8 2.9 14.8 6 C14.8 9.1 11.8 11.5 7.5 11.5 C6.5 11.5 5.5 11.3 4.6 11 L1 12 L1.8 9.2 C0.9 8.3 0.2 7.2 0.2 6 C0.2 2.9 3.2 0.5 7.5 0.5 Z" fill="#1a73e8"/><path d="M4.5 5 H10.5 M4.5 7.5 H8.5" stroke="#fff" stroke-width="1.1"/></svg>
<div class="t" style="left:1435.06px;top:173.88px;font-family:'Liberation Sans',sans-serif;font-size:14.5px;color:#1a1a1a;transform:scaleX(1.1745);">4</div>
<svg class="a" style="left:1472.50px;top:170.80px;" width="23.70" height="21.20" viewBox="0 0 24 23" preserveAspectRatio="none"><path d="M10 1 H14 L14.6 4.2 L17.2 5.6 L20.3 4.5 L22.3 7.9 L19.8 10 V13 L22.3 15.1 L20.3 18.5 L17.2 17.4 L14.6 18.8 L14 22 H10 L9.4 18.8 L6.8 17.4 L3.7 18.5 L1.7 15.1 L4.2 13 V10 L1.7 7.9 L3.7 4.5 L6.8 5.6 L9.4 4.2 Z" fill="none" stroke="#1a1a1a" stroke-width="1.5" stroke-linejoin="round"/><ellipse cx="12" cy="11.5" rx="3.2" ry="3.2" fill="none" stroke="#1a1a1a" stroke-width="1.5"/></svg>
<svg class="a" style="left:1519.20px;top:172.20px;" width="23.80" height="19.00" viewBox="0 0 24 19" preserveAspectRatio="none"><ellipse cx="7.5" cy="7" rx="3.5" ry="3.3" fill="none" stroke="#1a1a1a" stroke-width="1.5"/><path d="M1 13 H14 V14.5 C14 17 11 18.3 7.5 18.3 C4 18.3 1 17 1 14.5 Z" fill="none" stroke="#1a1a1a" stroke-width="1.5" stroke-linejoin="round"/><path d="M13 1 H22.5 V7 H17 L14.5 9.5 V7 H13 Z" fill="none" stroke="#1a1a1a" stroke-width="1.5" stroke-linejoin="round"/></svg>
<div class="a" style="left:1563.60px;top:179.40px;width:3.20px;height:3.20px;background:#1a1a1a;border-radius:50%"></div>
<div class="a" style="left:1573.20px;top:179.40px;width:3.20px;height:3.20px;background:#1a1a1a;border-radius:50%"></div>
<div class="a" style="left:1582.80px;top:179.40px;width:3.20px;height:3.20px;background:#1a1a1a;border-radius:50%"></div>
<svg class="a" style="left:1604.20px;top:174.80px;" width="17.80" height="13.80" viewBox="0 0 18 14" preserveAspectRatio="none"><path d="M0.5 0.5 L17.5 13.5 M17.5 0.5 L0.5 13.5" stroke="#1a1a1a" stroke-width="1.5"/></svg>
<svg class="a" style="left:940.00px;top:211.40px;" width="23.30" height="13.60" viewBox="0 0 23.3 13.6" preserveAspectRatio="none"><rect x="0.8" y="0.8" width="21.7" height="12" rx="1.5" fill="none" stroke="#1a1a1a" stroke-width="1.5"/><rect x="0.8" y="0.8" width="7" height="12" fill="#1a1a1a"/><path d="M11 6.8 H18 M15.5 4 L18.3 6.8 L15.5 9.6" fill="none" stroke="#1a1a1a" stroke-width="1.4"/></svg>
<svg class="a" style="left:986.70px;top:209.00px;" width="23.30" height="19.00" viewBox="0 0 23.3 19" preserveAspectRatio="none"><ellipse cx="11.65" cy="9.5" rx="10.8" ry="8.8" fill="none" stroke="#1a1a1a" stroke-width="1.5"/><path d="M4 16 L19.3 3" stroke="#1a1a1a" stroke-width="1.5"/></svg>
<div class="a" style="left:1022.3px;top:204.4px;width:69px;height:28.2px;background:#e6e6e6;border-radius:3px"></div>
<div class="t" style="left:1029.72px;top:211.82px;font-family:'Liberation Sans',sans-serif;font-size:15.5px;color:#1a1a1a;transform:scaleX(1.2178);">top</div>
<svg class="a" style="left:1068.70px;top:215.00px;" width="12.70" height="7.20" viewBox="0 0 12.7 7.2" preserveAspectRatio="none"><path d="M0 0 H12.7 L6.35 7.2 Z" fill="#1a1a1a"/></svg>
<svg class="a" style="left:1105.80px;top:212.90px;" width="22.50" height="12.10" viewBox="0 0 22.5 12.1" preserveAspectRatio="none"><path d="M1 8 C5 1 17.5 1 21.5 8" fill="none" stroke="#1a1a1a" stroke-width="1.5"/><ellipse cx="11.25" cy="7.5" rx="3.5" ry="3.3" fill="none" stroke="#1a1a1a" stroke-width="1.5"/></svg>
<div class="a" style="left:1145.2px;top:203.9px;width:176.6px;height:29.5px;background:#fff;border:1px solid #e3e3e3;border-radius:4px"></div>
<div class="t" style="left:1150.78px;top:211.82px;font-family:'Liberation Sans',sans-serif;font-size:15.5px;color:#767676;transform:scaleX(1.1490);">Filtro</div>
<div class="t" style="left:1335.96px;top:211.12px;font-family:'Liberation Sans',sans-serif;font-size:15.5px;color:#1a1a1a;transform:scaleX(1.1589);">Livelli predefiniti</div>
<svg class="a" style="left:1475.00px;top:215.30px;" width="12.00" height="7.00" viewBox="0 0 12 7" preserveAspectRatio="none"><path d="M0 0 H12 L6 7 Z" fill="#1a1a1a"/></svg>
<div class="a" style="left:1504.4px;top:205.4px;width:51.4px;height:25.8px;background:#ececec;border:1px solid #dadada;border-radius:3px"></div>
<svg class="a" style="left:1515.60px;top:213.00px;" width="14.90" height="11.30" viewBox="0 0 15 12" preserveAspectRatio="none"><path d="M7.5 0.5 C11.8 0.5 14.8 2.9 14.8 6 C14.8 9.1 11.8 11.5 7.5 11.5 C6.5 11.5 5.5 11.3 4.6 11 L1 12 L1.8 9.2 C0.9 8.3 0.2 7.2 0.2 6 C0.2 2.9 3.2 0.5 7.5 0.5 Z" fill="#1a73e8"/><path d="M4.5 5 H10.5 M4.5 7.5 H8.5" stroke="#fff" stroke-width="1.1"/></svg>
<div class="t" style="left:1536.67px;top:211.98px;font-family:'Liberation Sans',sans-serif;font-size:14.5px;color:#1a1a1a;transform:scaleX(1.1335);">4</div>
<svg class="a" style="left:1601.20px;top:208.40px;" width="24.30" height="20.40" viewBox="0 0 24 23" preserveAspectRatio="none"><path d="M10 1 H14 L14.6 4.2 L17.2 5.6 L20.3 4.5 L22.3 7.9 L19.8 10 V13 L22.3 15.1 L20.3 18.5 L17.2 17.4 L14.6 18.8 L14 22 H10 L9.4 18.8 L6.8 17.4 L3.7 18.5 L1.7 15.1 L4.2 13 V10 L1.7 7.9 L3.7 4.5 L6.8 5.6 L9.4 4.2 Z" fill="none" stroke="#1a1a1a" stroke-width="1.5" stroke-linejoin="round"/><ellipse cx="12" cy="11.5" rx="3.2" ry="3.2" fill="none" stroke="#1a1a1a" stroke-width="1.5"/></svg>
<div class="a" style="left:925.00px;top:263.50px;width:718.00px;height:1.00px;background:#ededed;"></div>
<div class="a" style="left:925.00px;top:288.30px;width:718.00px;height:1.00px;background:#ededed;"></div>
<div class="a" style="left:925.00px;top:312.80px;width:718.00px;height:1.00px;background:#ededed;"></div>
<div class="a" style="left:925.00px;top:337.40px;width:718.00px;height:1.00px;background:#ededed;"></div>
<div class="a" style="left:925.00px;top:362.20px;width:718.00px;height:1.00px;background:#ededed;"></div>
<div class="a" style="left:925.00px;top:386.00px;width:718.00px;height:1.00px;background:#ededed;"></div>
<div class="t" style="left:960.23px;top:245.49px;font-family:'Liberation Mono',monospace;font-size:13.3px;color:#1a1a1a;transform:scaleX(1.2168);">a[0] = 2</div>
<div class="t" style="left:1523.17px;top:246.29px;font-family:'Liberation Mono',monospace;font-size:13.3px;color:#23589a;transform:scaleX(1.2168);text-decoration:underline;text-underline-offset:2px;">app.js:3</div>
<div class="t" style="left:960.23px;top:270.12px;font-family:'Liberation Mono',monospace;font-size:13.3px;color:#1a1a1a;transform:scaleX(1.2168);">a[1] = 5</div>
<div class="t" style="left:1523.17px;top:270.92px;font-family:'Liberation Mono',monospace;font-size:13.3px;color:#23589a;transform:scaleX(1.2168);text-decoration:underline;text-underline-offset:2px;">app.js:3</div>
<div class="t" style="left:960.23px;top:294.75px;font-family:'Liberation Mono',monospace;font-size:13.3px;color:#1a1a1a;transform:scaleX(1.2168);">a[3] = 9</div>
<div class="t" style="left:1523.17px;top:295.55px;font-family:'Liberation Mono',monospace;font-size:13.3px;color:#23589a;transform:scaleX(1.2168);text-decoration:underline;text-underline-offset:2px;">app.js:3</div>
<div class="t" style="left:960.15px;top:319.38px;font-family:'Liberation Mono',monospace;font-size:13.3px;color:#1a1aa6;transform:scaleX(1.2168);">3</div>
<div class="t" style="left:1513.54px;top:320.18px;font-family:'Liberation Mono',monospace;font-size:13.3px;color:#23589a;transform:scaleX(1.2168);text-decoration:underline;text-underline-offset:2px;">app.js:22</div>
<div class="t" style="left:960.07px;top:344.01px;font-family:'Liberation Mono',monospace;font-size:13.3px;color:#1a1aa6;transform:scaleX(1.2168);">16</div>
<div class="t" style="left:1513.46px;top:344.81px;font-family:'Liberation Mono',monospace;font-size:13.3px;color:#23589a;transform:scaleX(1.2168);text-decoration:underline;text-underline-offset:2px;">app.js:23</div>
<div class="t" style="left:959.34px;top:368.64px;font-family:'Liberation Mono',monospace;font-size:13.3px;color:#1a1a1a;transform:scaleX(1.2168);">Live reload enabled.</div>
<div class="t" style="left:1474.38px;top:369.44px;font-family:'Liberation Mono',monospace;font-size:13.3px;color:#23589a;transform:scaleX(1.2168);text-decoration:underline;text-underline-offset:2px;">index.html:41</div>
<div class="a" style="left:925.00px;top:386.00px;width:718.00px;height:42.40px;background:#fdf0f0;"></div>
<div class="a" style="left:925.00px;top:386.00px;width:718.00px;height:1.00px;background:#f3dede;"></div>
<div class="a" style="left:925.00px;top:428.40px;width:718.00px;height:1.00px;background:#f7eccc;"></div>
<svg class="a" style="left:939.80px;top:392.70px;" width="15.20" height="14.10" viewBox="0 0 15.2 14.1" preserveAspectRatio="none"><ellipse cx="7.6" cy="7.05" rx="7.6" ry="7.05" fill="#d32f2f"/><path d="M5 4.5 L10.2 9.6 M10.2 4.5 L5 9.6" stroke="#fff" stroke-width="1.5"/></svg>
<div class="t" style="left:959.66px;top:394.89px;font-family:'Liberation Mono',monospace;font-size:13.3px;color:#c62828;transform:scaleX(1.2168);">Failed to load resource: the server responded</div>
<div class="t" style="left:961.04px;top:412.39px;font-family:'Liberation Mono',monospace;font-size:13.3px;color:#c62828;transform:scaleX(1.2168);">with a status of 404 (Not Found)</div>
<div class="t" style="left:1406.88px;top:395.69px;font-family:'Liberation Mono',monospace;font-size:13.3px;color:#23589a;transform:scaleX(1.2168);text-decoration:underline;text-underline-offset:2px;">favicon.ico:1</div>
<svg class="a" style="left:1545.50px;top:392.70px;" width="19.00" height="16.00" viewBox="0 0 19 16" preserveAspectRatio="none"><ellipse cx="9.5" cy="8" rx="8.7" ry="7.2" fill="none" stroke="#e8a33b" stroke-width="1.5"/><path d="M7 4 V12 M5 6 L7 4 L9 6 M12 4 V12 M10 10 L12 12 L14 10" fill="none" stroke="#e8a33b" stroke-width="1.3"/></svg>
<svg class="a" style="left:1580.80px;top:392.70px;" width="16.20" height="14.30" viewBox="0 0 17 14.5" preserveAspectRatio="none"><ellipse cx="9" cy="6.3" rx="5.8" ry="5" fill="none" stroke="#1a73e8" stroke-width="1.4"/><path d="M12.5 10 L16.5 14" stroke="#1a73e8" stroke-width="1.6"/></svg>
<div class="a" style="left:925.00px;top:429.40px;width:718.00px;height:25.10px;background:#fffbe8;"></div>
<div class="a" style="left:925.00px;top:454.50px;width:718.00px;height:1.00px;background:#efe9d6;"></div>
<svg class="a" style="left:940.30px;top:436.00px;" width="14.70" height="11.80" viewBox="0 0 15.2 13.3" preserveAspectRatio="none"><path d="M7.6 0 L15.2 13.3 H0 Z" fill="#ecb13f"/><path d="M7.6 4.5 V8.5 M7.6 10 V11.3" stroke="#fff" stroke-width="1.3"/></svg>
<svg class="a" style="left:969.40px;top:436.50px;" width="8.40" height="10.50" viewBox="0 0 8.4 10.5" preserveAspectRatio="none"><path d="M0 0 L8.4 5.25 L0 10.5 Z" fill="#1a1a1a"/></svg>
<div class="t" style="left:983.31px;top:437.19px;font-family:'Liberation Mono',monospace;font-size:13.3px;color:#5c3b00;transform:scaleX(1.2168);">Bartender API access denied.</div>
<div class="t" style="left:1373.15px;top:437.99px;font-family:'Liberation Mono',monospace;font-size:13.3px;color:#23589a;transform:scaleX(1.2168);text-decoration:underline;text-underline-offset:2px;">content_page.js:2506</div>
<svg class="a" style="left:1580.80px;top:435.30px;" width="16.20" height="14.50" viewBox="0 0 17 14.5" preserveAspectRatio="none"><ellipse cx="9" cy="6.3" rx="5.8" ry="5" fill="none" stroke="#1a73e8" stroke-width="1.4"/><path d="M12.5 10 L16.5 14" stroke="#1a73e8" stroke-width="1.6"/></svg>
<svg class="a" style="left:944.70px;top:461.20px;" width="7.60" height="10.20" viewBox="0 0 7.6 10.2" preserveAspectRatio="none"><path d="M1 0.8 L6.3 5.1 L1 9.4" fill="none" stroke="#2b6cb0" stroke-width="1.6"/></svg>
<div class="a" style="left:925.00px;top:938.20px;width:718.00px;height:1.00px;background:#dedede;"></div>
<div class="a" style="left:925.00px;top:939.20px;width:718.00px;height:38.50px;background:#f7f7f7;"></div>
<div class="a" style="left:936.00px;top:942.40px;width:90.50px;height:35.00px;background:#ffffff;border-radius:4px 4px 0 0"></div>
<div class="a" style="left:936.00px;top:974.90px;width:90.50px;height:2.00px;background:#2b78b5;"></div>
<div class="t" style="left:949.04px;top:951.83px;font-family:'Liberation Sans',sans-serif;font-size:15.5px;color:#1a1a1a;transform:scaleX(1.1135);">Console</div>
<div class="t" style="left:1039.87px;top:951.83px;font-family:'Liberation Sans',sans-serif;font-size:15.5px;color:#6a6a6a;transform:scaleX(1.1545);">Problemi</div>
<svg class="a" style="left:1155.00px;top:949.70px;" width="22.00" height="17.50" viewBox="0 0 22 17.5" preserveAspectRatio="none"><path d="M11 0 V17.5 M0 8.75 H22" stroke="#1a1a1a" stroke-width="1.5"/></svg>
<svg class="a" style="left:1604.00px;top:951.70px;" width="18.60" height="16.00" viewBox="0 0 18.6 16" preserveAspectRatio="none"><path d="M0.5 0.5 L18.1 15.5 M18.1 0.5 L0.5 15.5" stroke="#1a1a1a" stroke-width="1.4"/></svg>
<svg class="a" style="left:21.00px;top:983.00px;" width="16.00" height="14.00" viewBox="0 0 16 14" preserveAspectRatio="none"><ellipse cx="8" cy="7" rx="7.2" ry="6.3" fill="none" stroke="#fff" stroke-width="1.3"/><path d="M5.3 4.5 L10.7 9.5 M10.7 4.5 L5.3 9.5" stroke="#fff" stroke-width="1.3"/></svg>
<div class="t" style="left:42.33px;top:982.35px;font-family:'Liberation Sans',sans-serif;font-size:15px;color:#ffffff;transform:scaleX(1.1111);">0</div>
<svg class="a" style="left:57.00px;top:983.00px;" width="16.00" height="14.00" viewBox="0 0 16 14" preserveAspectRatio="none"><path d="M8 1 L15 13.3 H1 Z" fill="none" stroke="#fff" stroke-width="1.3" stroke-linejoin="round"/><path d="M8 5 V9.5 M8 10.8 V12" stroke="#fff" stroke-width="1.3"/></svg>
<div class="t" style="left:79.33px;top:982.35px;font-family:'Liberation Sans',sans-serif;font-size:15px;color:#ffffff;transform:scaleX(1.1111);">0</div>
<div class="t" style="left:1287.37px;top:982.35px;font-family:'Liberation Sans',sans-serif;font-size:15px;color:#ffffff;transform:scaleX(1.0292);">Ln 22, Col 26</div>
<div class="t" style="left:1399.94px;top:982.35px;font-family:'Liberation Sans',sans-serif;font-size:15px;color:#ffffff;transform:scaleX(0.9825);">Spaces: 4</div>
<div class="t" style="left:1486.26px;top:982.35px;font-family:'Liberation Sans',sans-serif;font-size:15px;color:#ffffff;transform:scaleX(1.0117);">UTF-8</div>
<div class="t" style="left:1549.73px;top:982.35px;font-family:'Liberation Sans',sans-serif;font-size:15px;color:#ffffff;transform:scaleX(0.8995);">CRLF</div>
<div class="t" style="left:1605.55px;top:982.35px;font-family:'Liberation Sans',sans-serif;font-size:15px;color:#ffffff;transform:scaleX(1.1062);">{ }</div>
<div class="t" style="left:1630.18px;top:982.35px;font-family:'Liberation Sans',sans-serif;font-size:15px;color:#ffffff;transform:scaleX(0.9989);">JavaScript</div>
<svg class="a" style="left:1722.30px;top:984.00px;" width="17.20" height="12.80" viewBox="0 0 17.2 12.8" preserveAspectRatio="none"><ellipse cx="8.6" cy="6.4" rx="7.8" ry="5.8" fill="none" stroke="#fff" stroke-width="1.3"/><path d="M3.5 11 L13.7 1.8" stroke="#fff" stroke-width="1.3"/></svg>
<div class="t" style="left:1744.26px;top:982.35px;font-family:'Liberation Sans',sans-serif;font-size:15px;color:#ffffff;transform:scaleX(1.0318);">Port : 5500</div>
<svg class="a" style="left:1841.70px;top:983.50px;" width="17.20" height="14.00" viewBox="0 0 17.2 14" preserveAspectRatio="none"><ellipse cx="6" cy="5.5" rx="3" ry="2.7" fill="none" stroke="#fff" stroke-width="1.2"/><path d="M0.8 13.5 C1.5 9.5 10.5 9.5 11.2 13.5" fill="none" stroke="#fff" stroke-width="1.2"/><path d="M7 1 H16.5 V7.5 H12 L10 9.5" fill="none" stroke="#fff" stroke-width="1.2"/></svg>
<svg class="a" style="left:1882.00px;top:983.00px;" width="17.30" height="14.50" viewBox="0 0 17.3 14.5" preserveAspectRatio="none"><path d="M3 11 V6.5 A5.3 5 0 0 1 13 5 V11 L15 12.5 H1 Z M6.5 13 A2 1.6 0 0 0 9.5 13" fill="none" stroke="#fff" stroke-width="1.2" stroke-linejoin="round"/><ellipse cx="14" cy="3" rx="3" ry="2.7" fill="#fff"/></svg>
<div class="a" style="left:474.60px;top:259.70px;width:1.80px;height:1.80px;background:#8a8a8a;border-radius:50%"></div>
<div class="a" style="left:479.60px;top:259.70px;width:1.80px;height:1.80px;background:#8a8a8a;border-radius:50%"></div>
<div class="a" style="left:484.60px;top:259.70px;width:1.80px;height:1.80px;background:#8a8a8a;border-radius:50%"></div>
<svg class="a" style="left:1847.00px;top:44.20px;" width="16.80" height="14.60" viewBox="0 0 17.3 14.3" preserveAspectRatio="none"><rect x="0.8" y="0.8" width="15.7" height="12.7" rx="1" fill="none" stroke="#424242" stroke-width="1.5"/><path d="M8.65 0.8 V13.5" stroke="#424242" stroke-width="1.5"/></svg>
<div class="a" style="left:1881.30px;top:50.60px;width:2.60px;height:2.60px;background:#424242;border-radius:50%"></div>
<div class="a" style="left:1888.10px;top:50.60px;width:2.60px;height:2.60px;background:#424242;border-radius:50%"></div>
<div class="a" style="left:1894.80px;top:50.60px;width:2.60px;height:2.60px;background:#424242;border-radius:50%"></div>
</body></html>
